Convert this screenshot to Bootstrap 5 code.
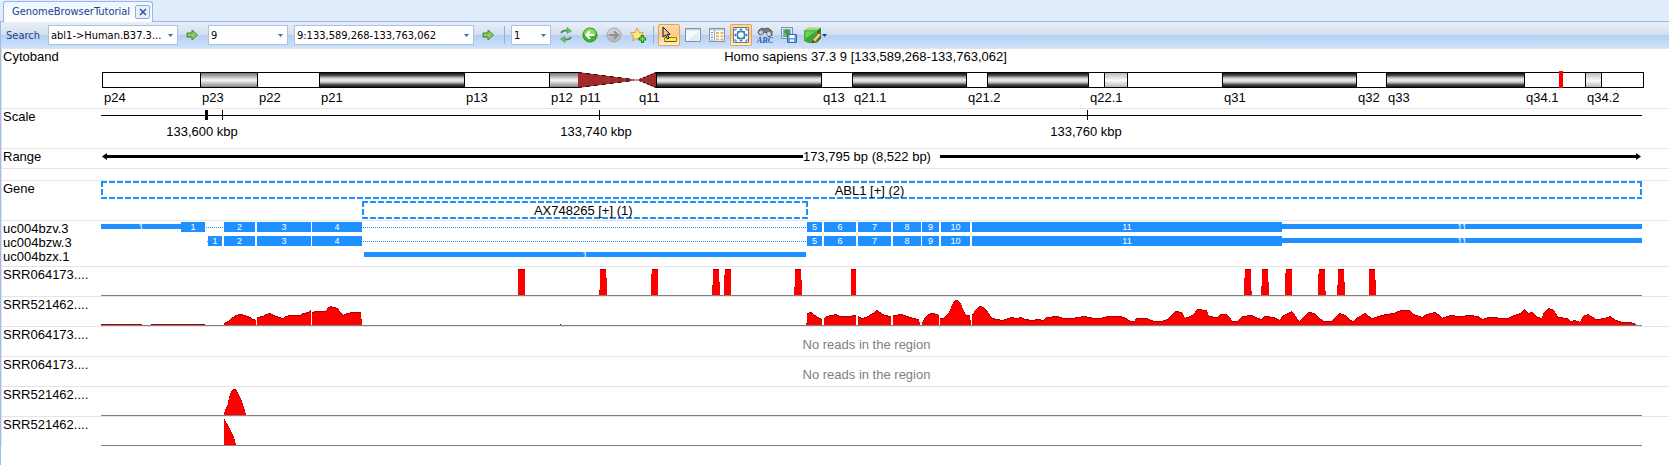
<!DOCTYPE html>
<html lang="en">
<head>
<meta charset="utf-8">
<meta name="viewport" content="width=device-width, initial-scale=1">
<title>GenomeBrowserTutorial</title>
<link href="https://cdn.jsdelivr.net/npm/bootstrap@5.3.0/dist/css/bootstrap.min.css" rel="stylesheet">
<style>
  :root { --exon: #1e90ff; --rule: #e4e4e4; --edge: #9dbce9; }
  body { font: 13px/16px "Liberation Sans", Arial, sans-serif; color: #000; background: #fff; }

  /* Tab strip and toolbar */
  .chrome { font: 11px/16px "DejaVu Sans Condensed", Tahoma, sans-serif; }
  .strip { height: 22px; background: #e1ecfd; border-bottom: 1px solid #94b9ea; padding: 1px 3px 0; }
  .doc-tab { height: 21px; padding: 0 2px 0 8px; gap: 5px; background: linear-gradient(#eef5ff, #fff);
    border: 1px solid #94b9ea; border-bottom: 0; border-radius: 3px 3px 0 0; }
  .doc-tab a { color: #1d428b; text-decoration: none; }
  .doc-close { width: 15px; height: 14px; padding: 0; border: 1px solid #94a9cc; border-radius: 2px; background: #e6f0fe; }
  .toolbar { height: 26px; padding: 0 5px; background: linear-gradient(#eaeff6 0, #d3dfef 50%, #b5d0f2 52%, #cfe2fa 100%); color: #1d428b; }
  .toolbar label { flex: none; padding-top: 2px; }
  .combo { height: 20px; padding: 1px 14px 0 2px; border: 1px solid #a9c1e4; border-radius: 0; color: #000; appearance: none;
    font: inherit;
    background: #fff url("data:image/svg+xml,%3Csvg xmlns='http://www.w3.org/2000/svg' width='5' height='3'%3E%3Cpath d='M0 0h5L2.500 3z' fill='%233f6db4'/%3E%3C/svg%3E") no-repeat right 4px center; }
  #region, #zoom { margin-left: 6px; }
  .w-xs { width: 40px; } .w-sm { width: 80px; } .w-md { width: 130px; } .w-lg { width: 180px; }
  .tools { gap: 2px; margin-left: 4px; }
  .mx-tool { margin: 0 2px; }
  .tool { width: 22px; height: 22px; padding: 0; border: 1px solid transparent; border-radius: 2px; background: none;
    display: flex; align-items: center; justify-content: center; flex: none; }
  .tool-go { width: 30px; }
  .tool-on { border-color: #e8a04c; background: linear-gradient(#fbdcae, #fdc988 45%, #fff0cf); }
  .tool-split { width: 28px; justify-content: flex-start; padding-left: 1px; }
  .divider { width: 1px; height: 18px; background: #8fb0de; flex: none; }
  .tool svg { flex: none; }

  /* Tracks */
  .viewer { border-left: 1px solid var(--edge); }
  .track { display: flex; border-top: 1px solid var(--rule); border-left: 1px solid var(--rule); padding-right: 27px; }
  .name { width: 99px; flex: none; padding-left: 1px; white-space: nowrap; }
  .plot { flex: 1 1 0; min-width: 0; }
  .h-cyto { height: 60px; } .h-mid { height: 40px; } .h-range { height: 20px; }
  .h-blank { height: 12px; } .h-tx { height: 46px; line-height: 14px; padding-top: 1px; } .h-cov { height: 30px; }
  .prop { display: flex; }
  .prop > * { flex: 0 0 0; min-width: 0; white-space: nowrap; }

  .title-shift { padding-right: 12px; }
  .ideogram { margin: 7px -2px 0 1px; }
  .band { line-height: 19px; position: relative; }
  .band::before { content: ""; display: block; height: 16px; border: solid #000; border-width: 1px 0 1px 1px; background: #fff; }
  .band:last-child::before { border-right-width: 1px; }
  .band span { padding-left: 2px; }
  .b-dark::before { background: linear-gradient(#111, #555 20%, #bbb 33%, #f0f0f0 50%, #c4c4c4 67%, #555 82%, #111); }
  .b-mid::before { background: linear-gradient(#777, #aaa 22%, #ddd 40%, #f6f6f6 52%, #ccc 70%, #888); }
  .b-light::before { background: linear-gradient(#bbb, #e4e4e4 35%, #fafafa 52%, #ddd 75%, #bbb); }
  .b-cen::before { display: none; }
  .b-cen svg { display: block; width: 100%; height: 16px; }
  .locus { position: absolute; top: -1px; left: 57%; width: 4px; height: 17px; background: #f00; }

  .axis { height: 10px; margin-top: 1px; background: linear-gradient(#000, #000) 0 5px / 100% 1px no-repeat; }
  .tick { width: 1px; flex-basis: 1px !important; background: #000; }
  .tick-wide { flex-basis: 3px !important; }
  .marks { margin-top: 4px; }
  .mark-at { display: flex; justify-content: center; }

  .range-bar { height: 15px; flex: 1; }
  .range-text { width: 137px; white-space: nowrap; }
  .shaft { flex: 1; height: 3px; background: #000; }

  .gene { height: 18px; line-height: 20px; text-align: center; padding-right: 4px;
    background:
      repeating-linear-gradient(90deg, var(--exon) 0 6px, transparent 6px 8px) 0 0 / 100% 2px no-repeat,
      repeating-linear-gradient(90deg, var(--exon) 0 6px, transparent 6px 8px) 0 100% / 100% 2px no-repeat,
      repeating-linear-gradient(var(--exon) 0 6px, transparent 6px 8px) 0 0 / 2px 100% no-repeat,
      repeating-linear-gradient(var(--exon) 0 6px, transparent 6px 8px) 100% 0 / 2px 100% no-repeat; }
  .gene-gap { gap: 2px; }

  .tx { height: 14px; }
  .exon, .utr { background: var(--exon); color: #fff; font-size: 9px; font-weight: 400; line-height: 10px; height: 10px; text-align: center; }
  .utr { height: 5px; line-height: 7px; margin-top: 2px; }
  .intron { height: 1px; margin-top: 5px; background: repeating-linear-gradient(90deg, var(--exon) 0 1px, transparent 1px 2px); }

  .cov { display: block; width: 100%; height: 29px; border-bottom: 1px solid #808080; overflow: hidden; }
  .cov .cap { fill: #a80000; } .cov .fill { fill: #f00; }
  .empty { color: #808080; padding: 10px 10px 0 0; text-align: center; }
</style>
</head>
<body>
<div class="d-flex flex-column min-vh-100">
  <header class="chrome">
    <div class="strip d-flex align-items-start">
      <div class="doc-tab d-flex align-items-center">
        <a href="#viewer">GenomeBrowserTutorial</a>
        <button class="doc-close d-flex align-items-center justify-content-center" type="button" aria-label="Close tab">
          <svg width="8" height="8" viewBox="0 0 8 8"><path d="M1 1l6 6M7 1l-6 6" stroke="#32599e" stroke-width="1.600"/></svg>
        </button>
      </div>
    </div>
    <div class="viewer toolbar d-flex align-items-center" role="toolbar" aria-label="Genome browser">
      <label for="search">Search</label>
      <select id="search" class="combo w-md ms-2"><option>abl1-&gt;Human.B37.3...</option></select>
      <button class="tool tool-go" type="button" aria-label="Go to gene"><svg width="13" height="12" viewBox="0 0 13 12"><path d="M1 4h5V1l5.500 5L6 11V8H1z" fill="#8fca5a" stroke="#477f31"/></svg></button>
      <select class="combo w-sm" aria-label="Chromosome"><option>9</option></select>
      <select class="combo w-lg" aria-label="Region" id="region"><option>9:133,589,268-133,763,062</option></select>
      <button class="tool tool-go" type="button" aria-label="Go to region"><svg width="13" height="12" viewBox="0 0 13 12"><path d="M1 4h5V1l5.500 5L6 11V8H1z" fill="#8fca5a" stroke="#477f31"/></svg></button>
      <span class="divider"></span>
      <select class="combo w-xs" aria-label="Zoom" id="zoom"><option>1</option></select>
      <div class="d-flex align-items-center tools">
        <button class="tool" type="button" aria-label="Refresh"><svg width="16" height="16" viewBox="0 0 16 16" fill="none" stroke="#4c9a50" stroke-width="2"><path d="M3 6c1-2 4-3 8-2M13 10c-1 2-4 3-8 2"/><path d="M9 0.500l4.500 3.500L9 6.500zM7 9.500L2.500 12 7 15.500z" fill="#6fbb63" stroke="#4c9a50" stroke-width=".6"/></svg></button>
        <button class="tool" type="button" aria-label="Back"><svg width="16" height="16" viewBox="0 0 16 16"><circle cx="8" cy="8" r="7" fill="#3db520" stroke="#2b9415"/><path d="M2 7a6 5.500 0 0112 0z" fill="#85dc5e"/><path d="M12.500 8H5M8 4.300L4.300 8 8 11.700" fill="none" stroke="#fff" stroke-width="2.200"/></svg></button>
        <button class="tool" type="button" aria-label="Forward"><svg width="16" height="16" viewBox="0 0 16 16"><circle cx="8" cy="8" r="7" fill="#b7b9bc" stroke="#a5a8ad"/><path d="M2 7a6 5.500 0 0112 0z" fill="#cfd0d2"/><path d="M3.500 8H11M8 4.300L11.700 8 8 11.700" fill="none" stroke="#8d9095" stroke-width="2"/></svg></button>
        <button class="tool" type="button" aria-label="Add favorite"><svg width="16" height="16" viewBox="0 0 16 16"><path d="M7 1l2 4.300 4.700.5-3.500 3.200 1 4.700L7 11.400l-4.200 2.300 1-4.700L.5 5.800l4.600-.5z" fill="#ffe68a" stroke="#d9a03a"/><path d="M11 8h3v2.500h2v3h-2V16h-3v-2.500H8.500v-3H11z" fill="#178a12"/><path d="M12.500 9.500v5M10 12h5" stroke="#8ef06a" stroke-width="1.200"/></svg></button>
        <span class="divider mx-tool"></span>
        <button class="tool tool-on" type="button" aria-label="Select" aria-pressed="true"><svg width="18" height="18" viewBox="0 0 18 18"><path d="M4.500 11.500h12v4h-12z" fill="#ffee2e" stroke="#8a8420"/><path d="M5 15.500h11" stroke="#555"/><path d="M3 1v10l2.500-2 2 4 1.700-1-2-3.700H10z" fill="#e6c9a0" stroke="#111"/></svg></button>
        <button class="tool" type="button" aria-label="Window"><svg width="16" height="16" viewBox="0 0 16 16"><path d="M.5 1.500h15v13H.5z" fill="#f6f9fa" stroke="#7d94a8"/><path d="M1 2h14v1.500H1z" fill="#c9d8e4"/><path d="M2 14L14 4v10z" fill="#e6eced"/></svg></button>
        <button class="tool" type="button" aria-label="Details"><svg width="16" height="16" viewBox="0 0 16 16"><path d="M.5 1.500h15v13H.5z" fill="#fff" stroke="#7d94a8"/><path d="M1 2h14v1.500H1z" fill="#b9cfe0"/><path d="M5.500 3v11" stroke="#9ab"/><path d="M2 5.500h2M2 8h2M2 10.500h2M2 13h2" stroke="#6f8fb0"/><path d="M7 5h3v2H7zM11.500 5h3v2h-3zM7 8.200h3v2H7zM11.500 8.200h3v2h-3zM7 11.400h3v2H7zM11.500 11.400h3v2h-3z" fill="#e8b56b"/></svg></button>
        <button class="tool tool-on" type="button" aria-label="Fit" aria-pressed="true"><svg width="16" height="16" viewBox="0 0 16 16"><path d="M.5.5h15v15H.5z" fill="#fff" stroke="#5b7a96"/><path d="M4 4h8v8H4z" fill="#3c87b8"/><circle cx="8" cy="8" r="2.800" fill="#fff"/><path d="M8 1l2 2.500H6zM8 15l2-2.500H6zM1 8l2.500-2v4zM15 8l-2.500-2v4z" fill="#2f75a8"/><path d="M2 2h2M2 2v2M14 2h-2M14 2v2M2 14h2M2 14v-2M14 14h-2M14 14v-2" stroke="#2f75a8"/></svg></button>
        <button class="tool" type="button" aria-label="Find text"><svg width="16" height="16" viewBox="0 0 16 16"><path d="M2 3l3-2 2 1 4-1 4 3v4l-3 2-2-2V6L7 5 6 7 3 8 1 6z" fill="#777d82" stroke="#3e4347" stroke-width=".8"/><circle cx="4" cy="5.500" r="2" fill="#c9ced3"/><circle cx="12" cy="7" r="2" fill="#d7dbdf"/><text x="0" y="15.500" font-family="Liberation Serif, serif" font-size="8" font-weight="bold" font-style="italic" fill="#2456b4">ABC</text></svg></button>
        <button class="tool" type="button" aria-label="Save image"><svg width="16" height="16" viewBox="0 0 16 16"><path d="M.5.5h11v11H.5z" fill="#d9e8f6" stroke="#6f93bd"/><path d="M2 2h8v8H2z" fill="#86b8dd"/><circle cx="6" cy="5" r="2.800" fill="#4f9a3e"/><path d="M2 8h8v2H2z" fill="#6cae4d"/><path d="M6.500 7.500h9v8h-9z" fill="#6b9be0" stroke="#3966b0"/><path d="M8.500 8h5v3h-5z" fill="#fff"/><path d="M9 12.500h4V15H9z" fill="#e6eefa"/></svg></button>
        <button class="tool tool-split" type="button" aria-label="Edit track"><svg width="18" height="17" viewBox="0 0 17 16"><path d="M0 3l4-2.500h11.500L12 3.500z" fill="#9be07c"/><path d="M0 3h12v12H4l-4-2z" fill="#3da935"/><path d="M12 3.500l4-3v10l-4 4.500z" fill="#237a22"/><path d="M1 4h10L1 11z" fill="#6fd057"/><path d="M7.500 15l.7-3L14 5.500l2.300 2L10.500 14z" fill="#f1d27c" stroke="#7a5b2a" stroke-width=".8"/><path d="M7.500 15l.7-3 2.300 2z" fill="#3d3d3d"/></svg><svg width="5" height="3" viewBox="0 0 5 3"><path d="M0 0h5L2.500 3z" fill="#1d428b"/></svg></button>
      </div>
    </div>
  </header>

  <main id="viewer" class="viewer flex-grow-1">
    <section class="track h-cyto">
      <div class="name">Cytoband</div>
      <div class="plot">
        <div class="text-center title-shift">Homo sapiens 37.3 9 [133,589,268-133,763,062]</div>
        <div class="prop ideogram">
          <div class="band" style="flex-grow:98"><span>p24</span></div>
          <div class="band b-mid" style="flex-grow:57"><span>p23</span></div>
          <div class="band" style="flex-grow:62"><span>p22</span></div>
          <div class="band b-dark" style="flex-grow:145"><span>p21</span></div>
          <div class="band" style="flex-grow:85"><span>p13</span></div>
          <div class="band b-mid" style="flex-grow:29"><span>p12</span></div>
          <div class="band b-cen" style="flex-grow:59"><svg viewBox="0 0 59 16" preserveAspectRatio="none"><path d="M0 0L56 7.500H59V8.500H56L0 16z" fill="#a52a2a"/><path d="M0 .5L56 7.500M0 15.500L56 8.500" stroke="#000" stroke-dasharray="4 4" fill="none"/></svg><span>p11</span></div>
          <div class="band b-cen" style="flex-grow:19"><svg viewBox="0 0 19 16" preserveAspectRatio="none"><path d="M19 0L2 7.500H0V8.500H2L19 16z" fill="#a52a2a"/><path d="M19 .5L2 7.500M19 15.500L2 8.500" stroke="#000" stroke-dasharray="2 2" fill="none"/></svg><span>q11</span></div>
          <div class="band b-dark" style="flex-grow:165"></div>
          <div class="band" style="flex-grow:31"><span>q13</span></div>
          <div class="band b-dark" style="flex-grow:114"><span>q21.1</span></div>
          <div class="band" style="flex-grow:21"><span>q21.2</span></div>
          <div class="band b-dark" style="flex-grow:101"></div>
          <div class="band" style="flex-grow:16"><span>q22.1</span></div>
          <div class="band b-light" style="flex-grow:23"></div>
          <div class="band" style="flex-grow:95"></div>
          <div class="band b-dark" style="flex-grow:134"><span>q31</span></div>
          <div class="band" style="flex-grow:30"><span>q32</span></div>
          <div class="band b-dark" style="flex-grow:138"><span>q33</span></div>
          <div class="band" style="flex-grow:61"><span>q34.1</span><i class="locus"></i></div>
          <div class="band b-light" style="flex-grow:16"><span>q34.2</span></div>
          <div class="band" style="flex-grow:43"></div>
        </div>
      </div>
    </section>

    <section class="track h-mid">
      <div class="name">Scale</div>
      <div class="plot">
        <div class="prop axis">
          <i style="flex-grow:104"></i><i class="tick tick-wide"></i><i style="flex-grow:14"></i><i class="tick"></i><i style="flex-grow:376"></i><i class="tick"></i><i style="flex-grow:488"></i><i class="tick"></i><i style="flex-grow:554"></i>
        </div>
        <div class="prop marks">
          <i style="flex-grow:101"></i><div class="mark-at"><span>133,600 kbp</span></div><i style="flex-grow:394"></i><div class="mark-at"><span>133,740 kbp</span></div><i style="flex-grow:490"></i><div class="mark-at"><span>133,760 kbp</span></div><i style="flex-grow:556"></i>
        </div>
      </div>
    </section>

    <section class="track h-range">
      <div class="name">Range</div>
      <div class="plot d-flex">
        <div class="range-bar d-flex align-items-center"><svg width="6" height="7" viewBox="0 0 6 7"><path d="M1 3.500L6 0v7z"/></svg><i class="shaft"></i></div>
        <div class="range-text">173,795 bp (8,522 bp)</div>
        <div class="range-bar d-flex align-items-center"><i class="shaft"></i><svg width="6" height="7" viewBox="0 0 6 7"><path d="M5 3.500L0 0v7z"/></svg></div>
      </div>
    </section>

    <section class="track h-blank"></section>

    <section class="track h-mid">
      <div class="name">Gene</div>
      <div class="plot d-flex flex-column gene-gap">
        <div class="gene">ABL1 [+] (2)</div>
        <div class="prop"><i style="flex-grow:262"></i><div class="gene" style="flex-grow:443">AX748265 [+] (1)</div><i style="flex-grow:836"></i></div>
      </div>
    </section>

    <section class="track h-tx">
      <div class="name"><div>uc004bzv.3</div><div>uc004bzw.3</div><div>uc004bzx.1</div></div>
      <div class="plot">
        <div class="prop tx">
          <b class="utr" style="flex-grow:80">1</b><b class="exon" style="flex-grow:24">1</b><i style="flex-grow:1"></i><i class="intron" style="flex-grow:18"></i>
          <b class="exon" style="flex-grow:31">2</b><i style="flex-grow:2"></i><b class="exon" style="flex-grow:54">3</b><i style="flex-grow:1"></i><b class="exon" style="flex-grow:50">4</b><i style="flex-grow:1"></i><i class="intron" style="flex-grow:443"></i><i style="flex-grow:1"></i>
          <b class="exon" style="flex-grow:15">5</b><i style="flex-grow:2"></i><b class="exon" style="flex-grow:32">6</b><i style="flex-grow:2"></i><b class="exon" style="flex-grow:33">7</b><i style="flex-grow:2"></i><b class="exon" style="flex-grow:28">8</b><i style="flex-grow:1"></i><b class="exon" style="flex-grow:17">9</b><i style="flex-grow:2"></i><b class="exon" style="flex-grow:29">10</b><i style="flex-grow:2"></i><b class="exon" style="flex-grow:310">11</b><b class="utr" style="flex-grow:360">11</b>
        </div>
        <div class="prop tx">
          <i style="flex-grow:106"></i><i class="intron" style="flex-grow:1"></i><b class="exon" style="flex-grow:14">1</b><i style="flex-grow:2"></i>
          <b class="exon" style="flex-grow:31">2</b><i style="flex-grow:2"></i><b class="exon" style="flex-grow:54">3</b><i style="flex-grow:1"></i><b class="exon" style="flex-grow:50">4</b><i style="flex-grow:1"></i><i class="intron" style="flex-grow:443"></i><i style="flex-grow:1"></i>
          <b class="exon" style="flex-grow:15">5</b><i style="flex-grow:2"></i><b class="exon" style="flex-grow:32">6</b><i style="flex-grow:2"></i><b class="exon" style="flex-grow:33">7</b><i style="flex-grow:2"></i><b class="exon" style="flex-grow:28">8</b><i style="flex-grow:1"></i><b class="exon" style="flex-grow:17">9</b><i style="flex-grow:2"></i><b class="exon" style="flex-grow:29">10</b><i style="flex-grow:2"></i><b class="exon" style="flex-grow:310">11</b><b class="utr" style="flex-grow:360">11</b>
        </div>
        <div class="prop tx">
          <i style="flex-grow:263"></i><b class="utr" style="flex-grow:442">1</b><i style="flex-grow:836"></i>
        </div>
      </div>
    </section>

    <section class="track h-cov">
      <div class="name">SRR064173....</div>
      <div class="plot">
        <svg class="cov" viewBox="101 267 1541 28" preserveAspectRatio="none" shape-rendering="crispEdges">
          <defs><path id="cov1" d="M518 295V269H525V295zM599 295V290H600V269H606V278H607V295zM651 295V274H652V269H658V295zM712 295V285H713V269H719V282H720V295zM724 295V275H725V269H731V295zM794 295V287H795V269H801V280H802V295zM851 295V269H856V295zM1244 295V278H1245V269H1251V291H1252V295zM1261 295V286H1262V269H1268V282H1269V295zM1285 295V273H1286V269H1292V295zM1318 295V274H1319V269H1325V291H1326V295zM1337 295V285H1338V269H1344V282H1345V295zM1369 295V269H1375V280H1376V295z"/></defs>
          <use class="cap" href="#cov1"/><use class="fill" href="#cov1" y="1"/>
        </svg>
      </div>
    </section>

    <section class="track h-cov">
      <div class="name">SRR521462....</div>
      <div class="plot">
        <svg class="cov" viewBox="101 297 1541 28" preserveAspectRatio="none" shape-rendering="crispEdges">
          <defs><path id="cov2" d="M101 325V324H142V325zM151 325V324H205V325zM560 325V324H561V325z
            M224 325L225 322 228 321 230 319 233 317 235 315 240 314 245 315 250 317 253 319 256 320 256 325z
            M257 325L257 317 263 316 266 314 270 313 274 315 279 317 283 318 286 316 290 315 300 315 303 313 309 312 310 310 311 310 311 325z
            M312 325L312 312 316 311 326 311 328 307 331 306 333 307 338 308 341 313 343 315 347 313 352 312 361 312 362 325z
            M806 325L806 323 807 323 807 313 811 312 815 315 820 318 822 319 822 325z
            M824 325L824 318 826 316 832 315 836 314 840 316 848 316 856 315 856 325z
            M858 325L858 316 862 318 868 316 873 313 877 310 880 312 885 315 891 316 891 325z
            M893 325L893 315 902 314 907 316 913 318 919 319 920 325z
            M922 325L922 323 924 319 928 314 932 313 937 314 939 316 939 325z
            M940 325L940 318 943 318 948 314 950 310 953 303 955 300 958 300 961 304 964 311 966 315 970 315 971 325z
            M972 325L972 315 974 312 977 308 980 306 984 307 988 312 992 318 997 319 1002 320 1008 318 1012 317 1016 318 1021 317 1025 319 1032 320 1038 319 1043 320 1047 317 1057 316 1064 318 1072 318 1078 317 1084 316 1094 318 1100 318 1108 316 1120 316 1126 318 1131 321 1135 321 1136 318 1147 318 1154 321 1162 321 1167 319 1171 315 1176 311 1182 312 1185 318 1190 316 1194 314 1197 309 1207 310 1209 316 1217 317 1220 314
            1226 314 1231 318 1232 321 1238 321 1242 316 1252 315 1256 317 1261 319 1265 316 1274 317 1280 320 1283 315 1286 314 1292 311 1295 315 1299 321 1302 318 1308 312 1315 313 1318 317 1324 321 1332 321 1337 315 1340 313 1345 315 1349 319 1353 321 1358 317 1365 313 1372 318 1378 316 1386 314 1394 313 1401 310 1409 310 1414 314 1422 317 1427 314 1435 312 1438 314 1442 318 1450 315 1460 316 1470 315 1478 316 1483 319 1488 317 1508 318 1514 315 1520 313 1524 309 1528 313 1532 312 1538 317 1542 318 1544 312 1549 308 1554 310 1558 317 1567 318 1571 321 1575 320 1580 322 1583 316 1588 314 1596 319 1605 318 1610 316 1616 320 1622 322 1630 322 1636 324 1636 325z"/></defs>
          <use class="cap" href="#cov2"/><use class="fill" href="#cov2" y="1"/>
        </svg>
      </div>
    </section>

    <section class="track h-cov">
      <div class="name">SRR064173....</div>
      <div class="plot empty">No reads in the region</div>
    </section>

    <section class="track h-cov">
      <div class="name">SRR064173....</div>
      <div class="plot empty">No reads in the region</div>
    </section>

    <section class="track h-cov">
      <div class="name">SRR521462....</div>
      <div class="plot">
        <svg class="cov" viewBox="101 387 1541 28" preserveAspectRatio="none" shape-rendering="crispEdges">
          <defs><path id="cov5" d="M224 415L225 410 228 404 229 397 231 392 233 389 236 389 238 393 241 399 244 407 246 415z"/></defs>
          <use class="cap" href="#cov5"/><use class="fill" href="#cov5" y="1"/>
        </svg>
      </div>
    </section>

    <section class="track h-cov">
      <div class="name">SRR521462....</div>
      <div class="plot">
        <svg class="cov" viewBox="101 417 1541 28" preserveAspectRatio="none" shape-rendering="crispEdges">
          <defs><path id="cov6" d="M224 445V419H225L226 422 228 425 231 431 234 437 236 445z"/></defs>
          <use class="cap" href="#cov6"/><use class="fill" href="#cov6" y="1"/>
        </svg>
      </div>
    </section>
  </main>
</div>
<script src="https://cdn.jsdelivr.net/npm/bootstrap@5.3.0/dist/js/bootstrap.bundle.min.js"></script>
</body>
</html>
